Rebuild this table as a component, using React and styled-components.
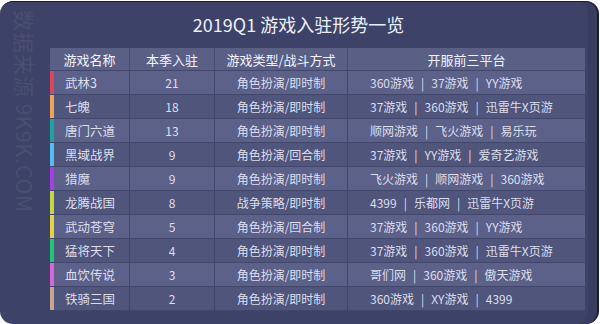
import React from 'react'
import styled, { createGlobalStyle } from 'styled-components'

const GlobalStyle = createGlobalStyle`
    html, body {
        margin: 0;
        padding: 0;
        background: #ffffff;
    }
    body {
        font-family: "Noto Sans CJK SC", "Noto Sans", sans-serif;
    }
`;

const games = [
    { name: '武林3', count: 21, type: '角色扮演/即时制', platforms: ['360游戏', '37游戏', 'YY游戏'], color: '#d9485a' },
    { name: '七魄', count: 18, type: '角色扮演/即时制', platforms: ['37游戏', '360游戏', '迅雷牛X页游'], color: '#f0a452' },
    { name: '唐门六道', count: 13, type: '角色扮演/即时制', platforms: ['顺网游戏', '飞火游戏', '易乐玩'], color: '#1fa3a0' },
    { name: '黑域战界', count: 9, type: '角色扮演/回合制', platforms: ['37游戏', 'YY游戏', '爱奇艺游戏'], color: '#56bdf0' },
    { name: '猎魔', count: 9, type: '角色扮演/即时制', platforms: ['飞火游戏', '顺网游戏', '360游戏'], color: '#a43ee6' },
    { name: '龙腾战国', count: 8, type: '战争策略/即时制', platforms: ['4399', '乐都网', '迅雷牛X页游'], color: '#c4d644' },
    { name: '武动苍穹', count: 5, type: '角色扮演/回合制', platforms: ['37游戏', '360游戏', 'YY游戏'], color: '#e2d244' },
    { name: '猛将天下', count: 4, type: '角色扮演/即时制', platforms: ['37游戏', '360游戏', '迅雷牛X页游'], color: '#1fc874' },
    { name: '血饮传说', count: 3, type: '角色扮演/即时制', platforms: ['哥们网', '360游戏', '傲天游戏'], color: '#d866d8' },
    { name: '铁骑三国', count: 2, type: '角色扮演/即时制', platforms: ['360游戏', 'XY游戏', '4399'], color: '#c4a692' },
]

function App() {
    return (
        <>
            <GlobalStyle />
            <Card>
                <Watermark>数据来源 9K9K.COM</Watermark>
                <Title>2019Q1 游戏入驻形势一览</Title>
                <Table>
                    <HeaderRow>
                        <HeadCell>游戏名称</HeadCell>
                        <HeadCell>本季入驻</HeadCell>
                        <HeadCell>游戏类型/战斗方式</HeadCell>
                        <HeadCell>开服前三平台</HeadCell>
                    </HeaderRow>
                    {games.map((game, i) => (
                        <Row key={game.name} $light={i % 2 === 0}>
                            <NameCell $strip={game.color}>{game.name}</NameCell>
                            <Cell>{game.count}</Cell>
                            <Cell>{game.type}</Cell>
                            <PlatformCell>
                                {game.platforms.map((p, j) => (
                                    <React.Fragment key={p}>
                                        {j > 0 && <Sep>|</Sep>}
                                        <span>{p}</span>
                                    </React.Fragment>
                                ))}
                            </PlatformCell>
                        </Row>
                    ))}
                </Table>
            </Card>
        </>
    )
}

const Card = styled.div`
    position: relative;
    box-sizing: border-box;
    width: 599px;
    height: 323px;
    margin-top: 1px;
    background: #3d4368;
    border-top: 1px solid #1a1c33;
    border-right: 2px solid #1a1c33;
    border-radius: 13px;
    box-shadow: inset -9px 0 0 #383d62;
    overflow: hidden;
    display: flex;
    flex-direction: column;
`;

const Watermark = styled.div`
    position: absolute;
    left: 10px;
    top: 8px;
    writing-mode: vertical-rl;
    text-orientation: sideways;
    font-size: 21px;
    letter-spacing: 1px;
    color: rgba(255, 255, 255, 0.08);
    white-space: nowrap;
    font-family: "Noto Sans CJK SC", "Liberation Sans", sans-serif;
`;

const Title = styled.h1`
    margin: 0;
    padding-top: 8px;
    height: 38px;
    line-height: 28px;
    text-align: center;
    font-size: 18px;
    font-weight: normal;
    color: #eceef6;
`;

const Table = styled.div`
    margin-left: 50px;
    width: 535px;
    display: flex;
    flex-direction: column;
`;

const cols = '80px 85px 133px 237px';

const HeaderRow = styled.div`
    display: grid;
    grid-template-columns: ${cols};
    height: 23px;
    background: #5a5f86;
    border-bottom: 1px solid #41466b;
    box-sizing: border-box;
`;

const HeadCell = styled.div`
    display: flex;
    align-items: center;
    justify-content: center;
    font-size: 13px;
    color: #f2f3fa;
    border-right: 1px solid #474c72;
    &:last-child {
        border-right: none;
    }
`;

const Row = styled.div`
    display: grid;
    grid-template-columns: ${cols};
    height: 24px;
    box-sizing: border-box;
    background: ${p => (p.$light ? '#5c6189' : '#50557b')};
    border-bottom: 1px solid #41466b;
`;

const Cell = styled.div`
    display: flex;
    align-items: center;
    justify-content: center;
    font-size: 12px;
    color: #dcdeec;
    border-right: 1px solid #41466b;
`;

const NameCell = styled(Cell)`
    justify-content: flex-start;
    padding-left: 11px;
    font-size: 12.5px;
    border-left: 4px solid ${p => p.$strip};
`;

const PlatformCell = styled(Cell)`
    justify-content: flex-start;
    padding-left: 22px;
    border-right: none;
    white-space: nowrap;
`;

const Sep = styled.span`
    margin: 0 7px;
`;

export default App
